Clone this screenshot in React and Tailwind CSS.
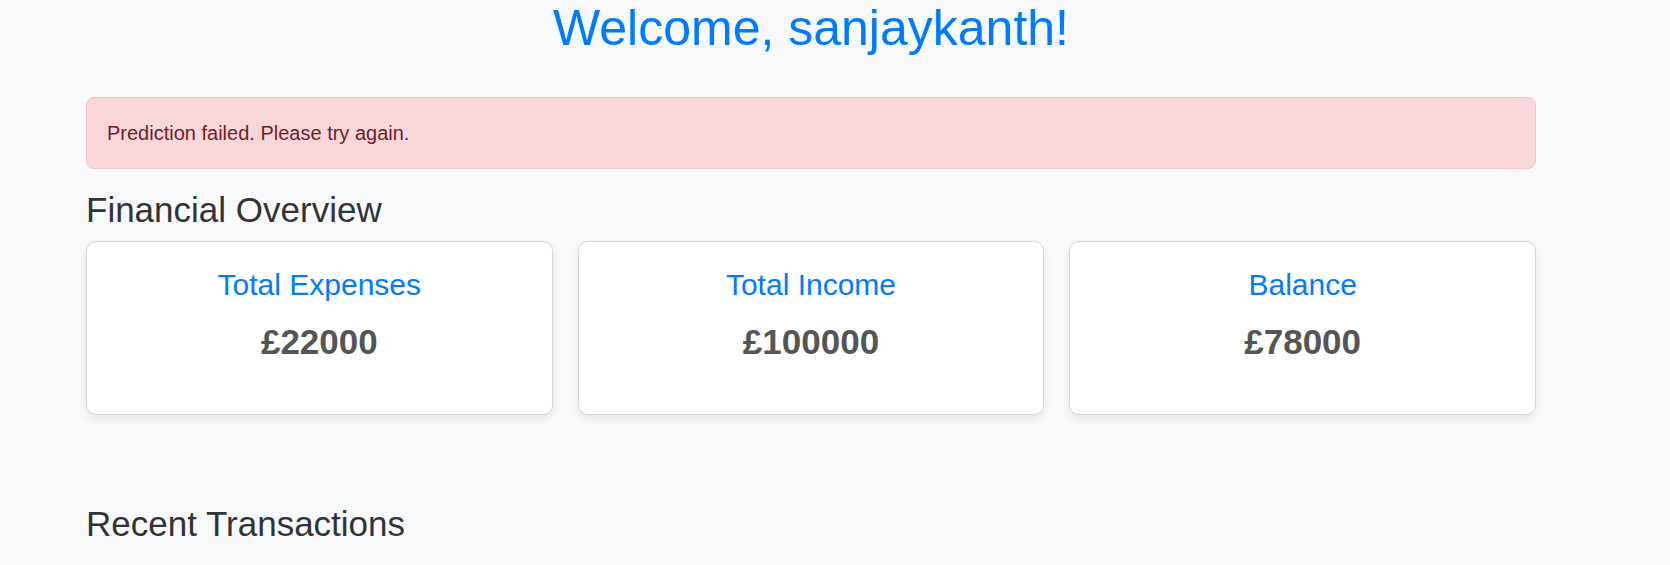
export default function App() {
  const cards = [
    { title: "Total Expenses", value: "£22000" },
    { title: "Total Income", value: "£100000" },
    { title: "Balance", value: "£78000" },
  ];
  return (
    <div
      className="min-h-[565px] bg-[#f8f9fa] text-[#333333]"
      style={{ fontFamily: '"Liberation Sans", Arial, sans-serif' }}
    >
      <div className="ml-[86px] w-[1450px]">
        <h1 className="text-center text-[50px] leading-[56px] text-[#007bff] font-normal">
          Welcome, sanjaykanth!
        </h1>
        <div className="mt-[41px] rounded-[8px] border border-[#f5c2c7] bg-[#f8d7da] px-[20px] py-[20px] text-[20px] leading-[30px] text-[#721c24]">
          Prediction failed. Please try again.
        </div>
        <h2 className="mt-[20px] text-[35px] leading-[42px] text-[#333333] font-normal">
          Financial Overview
        </h2>
        <div className="mt-[10px] grid grid-cols-3 gap-[25px]">
          {cards.map((c) => (
            <div
              key={c.title}
              className="h-[174px] rounded-[10px] border border-[#d6d6d6] bg-white pt-[25px] text-center shadow-[0_4px_10px_rgba(0,0,0,0.08)]"
            >
              <div className="text-[30px] leading-[36px] text-[#007bff]">{c.title}</div>
              <div className="mt-[18px] text-[35px] leading-[42px] font-bold text-[#555555]">
                {c.value}
              </div>
            </div>
          ))}
        </div>
        <h2 className="mt-[88px] text-[35px] leading-[42px] text-[#333333] font-normal">
          Recent Transactions
        </h2>
      </div>
    </div>
  );
}
